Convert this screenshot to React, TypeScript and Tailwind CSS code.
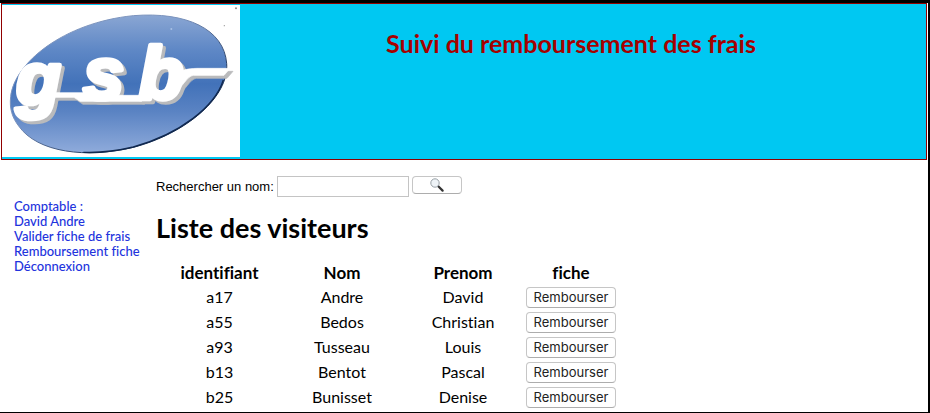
const visitors = [
  { id: "a17", nom: "Andre", prenom: "David" },
  { id: "a55", nom: "Bedos", prenom: "Christian" },
  { id: "a93", nom: "Tusseau", prenom: "Louis" },
  { id: "b13", nom: "Bentot", prenom: "Pascal" },
  { id: "b25", nom: "Bunisset", prenom: "Denise" },
];

const links = ["Valider fiche de frais", "Remboursement fiche", "Déconnexion"];

function Logo() {
  return (
    <svg
      viewBox="6 15 714 456"
      className="h-[152px] w-[238px] shrink-0 bg-white"
      role="img"
      aria-label="Logo gsb"
    >
      <defs>
        <linearGradient id="oval" x1="0" y1="0" x2="0" y2="1">
          <stop offset="0" stopColor="#8aa6d3" />
          <stop offset="0.25" stopColor="#5f88c6" />
          <stop offset="0.5" stopColor="#4272b9" />
          <stop offset="0.7" stopColor="#5a83c3" />
          <stop offset="1" stopColor="#8fabdb" />
        </linearGradient>
        <linearGradient id="rim" x1="0" y1="0" x2="1" y2="1">
          <stop offset="0.4" stopColor="#7b93bd" />
          <stop offset="0.75" stopColor="#10284f" />
        </linearGradient>
        <filter id="relief" x="-10%" y="-10%" width="120%" height="120%">
          <feDropShadow dx="9" dy="9" stdDeviation="0.5" floodColor="#b9babc" floodOpacity="1" />
        </filter>
      </defs>
      <path
        d="M32 290C42 190 190 68 400 47C560 34 672 88 680 190C688 290 560 400 400 442C260 476 112 458 56 378C36 352 28 325 32 290Z"
        fill="url(#oval)"
        stroke="url(#rim)"
        strokeWidth="3"
      />
      <path d="M670 240C645 320 540 402 400 441C350 453 300 459 250 457" fill="none" stroke="#10284f" strokeWidth="4" />
      <g
        fill="#fff"
        stroke="#fff"
        filter="url(#relief)"
        fontFamily="'Liberation Sans', Arial, sans-serif"
        fontStyle="italic"
        fontWeight="700"
        fontSize="220"
        strokeLinejoin="round"
      >
        <text x="48" y="312" strokeWidth="14">g</text>
        <text x="250" y="298" strokeWidth="14">s</text>
        <text x="416" y="298" strokeWidth="14">b</text>
        <path d="M160 278H270L310 286H440L425 304H240L222 292H150ZM530 222C550 206 575 205 600 205H690L672 226H580C560 228 550 262 510 290Z" strokeWidth="2" />
      </g>
      <circle cx="708" cy="25" r="3" fill="#888" />
      <circle cx="673" cy="77" r="2" fill="#999" />
      <circle cx="514" cy="87" r="3" fill="#a9c0e4" />
    </svg>
  );
}

function Magnifier() {
  return (
    <svg viewBox="0 0 14 14" className="size-[14px]" aria-hidden="true">
      <path d="M8 8L12.600 12.600" stroke="#333" strokeWidth="2.200" strokeLinecap="round" />
      <circle cx="5" cy="5" r="4.200" fill="#eef3f7" stroke="#98a0a6" strokeWidth="1" />
    </svg>
  );
}

export default function App() {
  return (
    <div className="min-h-screen border-t-[3px] border-r-2 border-b border-black bg-white font-['Lato','Trebuchet_MS',sans-serif] text-black [font-variant-ligatures:none]">
      <header className="mr-px ml-px flex border border-[#900000] bg-[#00c8f2] pt-px pb-[2px]">
        <Logo />
        <h1 className="flex-1 pt-5 pr-6 text-center text-[25px] leading-9 font-bold text-[#a60000]">
          Suivi du remboursement des frais
        </h1>
      </header>

      <div className="flex">
        <nav className="w-[156px] shrink-0 pt-[39px] pl-[14px] text-[13px] leading-[15px] font-medium text-[#2233dd]">
          <p>
            Comptable :<br />
            David Andre
          </p>
          <ul>
            {links.map((link) => (
              <li key={link}>
                <a href="#" className="whitespace-nowrap">{link}</a>
              </li>
            ))}
          </ul>
        </nav>

        <main className="flex-1 pt-4">
          <form className="flex items-start gap-[3px] font-['Liberation_Sans',sans-serif] text-[13px]">
            <label htmlFor="nom" className="leading-[21px]">Rechercher un nom:</label>
            <input id="nom" type="text" className="h-[21px] w-[132px] border border-[#c4c4c4] px-1" />
            <button
              type="button"
              aria-label="Rechercher"
              className="flex h-[18px] w-[50px] items-center justify-center rounded-[4px] border border-[#c6c6c6] border-b-[#adadad] bg-white"
            >
              <Magnifier />
            </button>
          </form>

          <h2 className="mt-[15px] text-[27px] leading-8 font-bold">Liste des visiteurs</h2>

          <table className="mt-4 text-center text-base leading-[25px]">
            <thead>
              <tr className="text-[17px]">
                <th className="w-[127px]">identifiant</th>
                <th className="w-[118px]">Nom</th>
                <th className="w-[124px]">Prenom</th>
                <th className="w-[92px]">fiche</th>
              </tr>
            </thead>
            <tbody>
              {visitors.map((v) => (
                <tr key={v.id} className="h-[25px] align-top leading-[23px]">
                  <td>{v.id}</td>
                  <td>{v.nom}</td>
                  <td>{v.prenom}</td>
                  <td className="pt-[2px]">
                    <button
                      type="button"
                      className="mx-auto block h-[21px] w-[90px] rounded-[4px] border border-[#c6c6c6] border-b-[#adadad] bg-white font-['Inter',sans-serif] text-[13px] leading-[19px] text-[#222]"
                    >
                      Rembourser
                    </button>
                  </td>
                </tr>
              ))}
            </tbody>
          </table>
        </main>
      </div>
    </div>
  );
}
